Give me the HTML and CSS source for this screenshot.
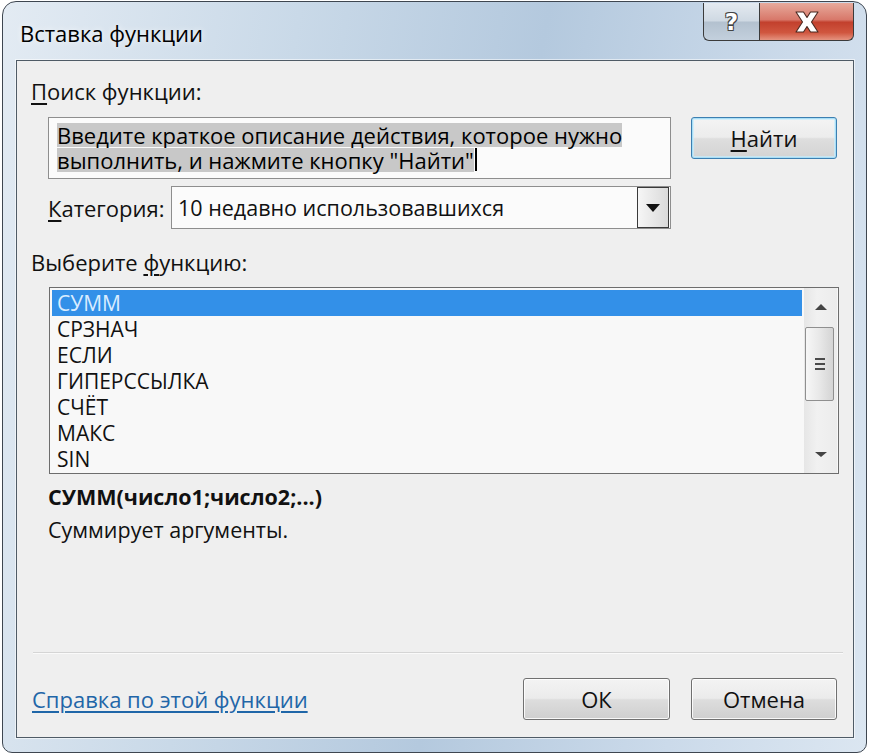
FILE: index.html
```html
<!DOCTYPE html>
<html lang="ru">
<head>
    <meta charset="UTF-8">
    <title>Вставка функции</title>
    <link rel="stylesheet" href="styles.css">
</head>
<body>
    <div class="dialog">
        <div class="titlebar">
            <span class="title">Вставка функции</span>
            <div class="caption">
                <button class="cap-btn help">?</button>
                <button class="cap-btn close">
                    <svg width="32" height="24" viewBox="0 0 32 24">
                        <path d="M5 2 L12.5 2 L16 7.5 L19.5 2 L27 2 L20.5 12 L27 22 L19.5 22 L16 16.5 L12.5 22 L5 22 L11.5 12 Z" fill="#ffffff" stroke="#4a2a22" stroke-width="1.1" stroke-linejoin="round"/>
                    </svg>
                </button>
            </div>
        </div>

        <div class="client">
            <div class="label"><u>П</u>оиск функции:</div>

            <div class="search-row">
                <div class="search-box">
                    <span class="sel">Введите краткое описание действия, которое нужно</span><br>
                    <span class="sel">выполнить, и нажмите кнопку "Найти"</span><span class="caret"></span>
                </div>
                <button class="btn btn-find"><u>Н</u>айти</button>
            </div>

            <div class="category-row">
                <span class="cat-label"><u>К</u>атегория:</span>
                <div class="combo">
                    <span class="combo-text">10 недавно использовавшихся</span>
                    <span class="combo-arrow"><i class="tri-down"></i></span>
                </div>
            </div>

            <div class="label label-choose">Выберите <u>ф</u>ункцию:</div>

            <div class="listbox">
                <ul class="items">
                    <li class="selected">СУММ</li>
                    <li>СРЗНАЧ</li>
                    <li>ЕСЛИ</li>
                    <li>ГИПЕРССЫЛКА</li>
                    <li>СЧЁТ</li>
                    <li>МАКС</li>
                    <li>SIN</li>
                </ul>
                <div class="scrollbar">
                    <div class="sb-arrow"><i class="tri-up"></i></div>
                    <div class="sb-track">
                        <div class="sb-thumb">
                            <span></span><span></span><span></span>
                        </div>
                    </div>
                    <div class="sb-arrow"><i class="tri-down small"></i></div>
                </div>
            </div>

            <div class="signature">СУММ(число1;число2;...)</div>
            <div class="description">Суммирует аргументы.</div>

            <div class="separator"></div>

            <div class="footer">
                <a class="help-link" href="#">Справка по этой функции</a>
                <div class="actions">
                    <button class="btn btn-ok">ОК</button>
                    <button class="btn btn-cancel">Отмена</button>
                </div>
            </div>
        </div>
    </div>
</body>
</html>
```

FILE: styles.css
```css
/* Page */
body {
    margin: 0;
    padding: 0;
    background: #ffffff;
    font-family: "Open Sans", "Noto Sans", sans-serif;
    color: #111;
}

/* Window frame */
.dialog {
    box-sizing: border-box;
    width: 865px;
    height: 752px;
    margin: 1px 0 0 2px;
    padding: 0 12px 14px 13px;
    border: 1px solid #3e4650;
    border-radius: 14px 14px 10px 10px;
    background: linear-gradient(100deg, #e3ebf3 0%, #c9d9e8 30%, #b4c9de 55%, #cbdaea 80%, #dbe6f1 100%);
    display: flex;
    flex-direction: column;
}

.titlebar {
    height: 58px;
    display: flex;
    justify-content: space-between;
    align-items: flex-start;
    flex-shrink: 0;
}

.title {
    margin: 18px 0 0 4px;
    font-size: 22px;
    line-height: 26px;
    color: #000;
    text-shadow: 0 0 6px rgba(255, 255, 255, 0.9);
}

.caption {
    display: flex;
    margin-top: 1px;
}

.cap-btn {
    height: 38px;
    border: 1px solid #3b3b3b;
    border-top: none;
    padding: 0;
    display: flex;
    align-items: center;
    justify-content: center;
}

.help {
    width: 56px;
    border-radius: 0 0 0 6px;
    border-right: none;
    background: linear-gradient(to bottom, #e4eaf0 0%, #cfd9e3 48%, #b3c1cf 52%, #c3d0dd 100%);
    font-family: "DejaVu Sans", sans-serif;
    font-weight: bold;
    font-size: 23px;
    color: #fff;
    text-shadow: -1px -1px 0 #444, 1px -1px 0 #444, -1px 1px 0 #444, 1px 1px 0 #444;
}

.close {
    width: 95px;
    border-radius: 0 0 6px 0;
    background: linear-gradient(to bottom, #e7aa9c 0%, #d8786a 45%, #c2402d 52%, #d0563f 80%, #e59380 100%);
}

/* Client area */
.client {
    flex: 1;
    box-sizing: border-box;
    border: 1px solid #4f5b66;
    box-shadow: 0 0 0 1px rgba(255, 255, 255, 0.55);
    background: #efefef;
    padding: 18px 13px 0 14px;
    display: flex;
    flex-direction: column;
    font-size: 22px;
}

.label {
    line-height: 24px;
    height: 24px;
}

u {
    text-underline-offset: 3px;
}

/* Search */
.search-row {
    display: flex;
    align-items: flex-start;
    margin: 14px 0 0 17px;
}

.search-box {
    box-sizing: border-box;
    width: 623px;
    height: 62px;
    border: 1px solid #8e8e8e;
    background: #fbfbfb;
    padding: 5px 0 0 8px;
    line-height: 25px;
    white-space: nowrap;
    overflow: hidden;
}

.sel {
    display: inline-block;
    vertical-align: top;
    height: 24px;
    line-height: 24px;
    background: #c8c8c8;
    color: #000;
}

.caret {
    display: inline-block;
    vertical-align: top;
    width: 2px;
    height: 23px;
    background: #000;
    margin-left: 1px;
}

.btn {
    box-sizing: border-box;
    height: 42px;
    border: 1px solid #707070;
    border-radius: 3px;
    background: linear-gradient(to bottom, #f3f3f3 0%, #ebebeb 48%, #dddddd 52%, #cfcfcf 100%);
    box-shadow: inset 0 0 0 1px rgba(255, 255, 255, 0.85);
    font-family: inherit;
    font-size: 22px;
    color: #111;
    padding: 0;
}

.btn-find {
    width: 146px;
    margin-left: 20px;
    border-color: #3c7fb1;
    box-shadow: inset 0 0 0 1px #a9def6, inset 0 0 0 2px rgba(200, 236, 252, 0.7);
    background: linear-gradient(to bottom, #f4f4f4 0%, #ececec 48%, #dedede 52%, #d3d3d3 100%);
}

/* Category */
.category-row {
    display: flex;
    align-items: center;
    margin: 7px 0 0 17px;
}

.cat-label {
    width: 123px;
}

.combo {
    box-sizing: border-box;
    width: 500px;
    height: 43px;
    border: 1px solid #8e8e8e;
    background: #fbfbfb;
    display: flex;
    align-items: center;
    justify-content: space-between;
    padding: 0 1px 0 6px;
    font-size: 21.5px;
}

.combo-arrow {
    box-sizing: border-box;
    width: 32px;
    height: 41px;
    border: 1px solid #3a3a3a;
    background: linear-gradient(to right, #f6f6f6, #dadada);
    display: flex;
    align-items: center;
    justify-content: center;
}

.tri-down {
    width: 0;
    height: 0;
    border-left: 7px solid transparent;
    border-right: 7px solid transparent;
    border-top: 8px solid #111;
}

.tri-down.small {
    border-left-width: 6px;
    border-right-width: 6px;
    border-top: 5px solid #444;
}

.tri-up {
    width: 0;
    height: 0;
    border-left: 6px solid transparent;
    border-right: 6px solid transparent;
    border-bottom: 6px solid #444;
}

.label-choose {
    margin-top: 21px;
}

/* List */
.listbox {
    box-sizing: border-box;
    width: 790px;
    height: 187px;
    margin: 13px 0 0 18px;
    border: 1px solid #6d6d6d;
    background: #f8f8f8;
    display: flex;
    font-size: 21px;
}

.items {
    list-style: none;
    margin: 0;
    padding: 2px;
    flex: 1;
}

.items li {
    height: 26px;
    line-height: 26px;
    padding-left: 5px;
}

.items li.selected {
    background: #3390e8;
    color: #d9ecff;
}

.scrollbar {
    width: 33px;
    margin-right: 1px;
    display: flex;
    flex-direction: column;
    background: linear-gradient(to right, #e6e6e6, #f1f1f1 40%, #ececec);
}

.sb-arrow {
    height: 37px;
    display: flex;
    align-items: center;
    justify-content: center;
}

.sb-track {
    flex: 1;
    padding: 2px 3px 0 1px;
}

.sb-thumb {
    box-sizing: border-box;
    height: 74px;
    border: 1px solid #8f8f8f;
    border-radius: 2px;
    background: linear-gradient(to right, #f7f7f7, #e8e8e8 50%, #d4d4d4);
    display: flex;
    flex-direction: column;
    align-items: center;
    justify-content: center;
    gap: 3px;
}

.sb-thumb span {
    width: 10px;
    height: 2px;
    background: #4a4a4a;
}

/* Details */
.signature {
    margin: 11px 0 0 17px;
    line-height: 24px;
    font-weight: bold;
    font-size: 21.5px;
}

.description {
    margin: 9px 0 0 17px;
    line-height: 24px;
    font-size: 21.5px;
}

.separator {
    margin: auto -3px 0 2px;
    height: 1px;
    background: #d5d5d5;
    border-bottom: 1px solid #fafafa;
}

/* Footer */
.footer {
    display: flex;
    justify-content: space-between;
    align-items: center;
    margin-top: 24px;
    padding-bottom: 17px;
}

.help-link {
    margin-left: 1px;
    color: #1f66a8;
    text-decoration: underline;
    text-underline-offset: 3px;
}

.actions {
    display: flex;
    gap: 21px;
    margin-right: 3px;
}

.btn-ok {
    width: 147px;
}

.btn-cancel {
    width: 146px;
}
```
